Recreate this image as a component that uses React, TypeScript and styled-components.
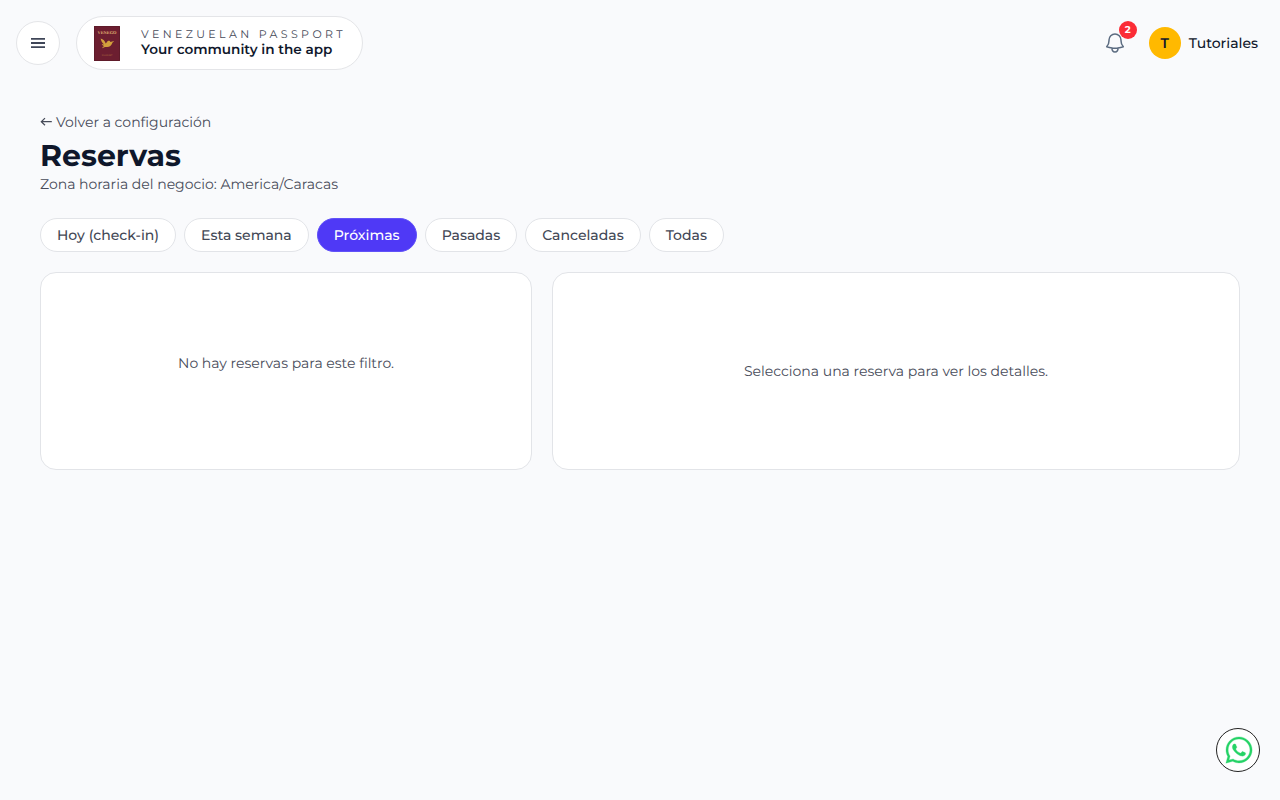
import React from "react";
import styled, { createGlobalStyle } from "styled-components";
import { FaWhatsapp } from "react-icons/fa";

const GlobalStyle = createGlobalStyle`
  *, *::before, *::after { box-sizing: border-box; }
  body {
    margin: 0;
    background: #f9fafc;
    color: #0f172b;
    font-family: Montserrat, Inter, "Noto Sans", sans-serif;
    font-size: 14px;
    line-height: 20px;
    text-rendering: geometricPrecision;
  }
  h1, p { margin: 0; }
  button, a { font: inherit; color: inherit; text-decoration: none; text-rendering: inherit; }
`;

const Page = styled.div`
  min-height: 100vh;
  display: flex;
  flex-direction: column;
`;

const Header = styled.header`
  height: 86px;
  padding: 0 22px 0 16px;
  display: flex;
  align-items: center;
  justify-content: space-between;
`;

const HeaderGroup = styled.div<{ $gap: number }>`
  display: flex;
  align-items: center;
  gap: ${(p) => p.$gap}px;
`;

const MenuButton = styled.button`
  width: 44px;
  height: 44px;
  padding: 0;
  display: grid;
  place-items: center;
  border: 1px solid #e4e5e8;
  border-radius: 50%;
  background: #fff;
`;

const Brand = styled.a`
  width: 287px;
  height: 54px;
  padding-left: 17px;
  display: flex;
  align-items: center;
  border: 1px solid #e4e5e8;
  border-radius: 27px;
  background: #fff;
`;

const BrandCopy = styled.div`
  margin: -3px 0 0 21px;
  white-space: nowrap;
`;

const BrandEyebrow = styled.div`
  margin-bottom: 2px;
  color: #474b59;
  font-size: 11px;
  line-height: 14px;
  letter-spacing: 3.38px;
  text-transform: uppercase;
`;

const BrandTitle = styled.div`
  font-size: 13.6px;
  font-weight: 600;
  line-height: 14px;
`;

const BellButton = styled.button`
  position: relative;
  width: 24px;
  height: 24px;
  padding: 0;
  border: 0;
  background: none;
  color: #5b6b80;
  svg { display: block; }
`;

const Badge = styled.span`
  position: absolute;
  top: -10px;
  left: 16px;
  width: 18px;
  height: 18px;
  border-radius: 50%;
  background: #fb2c36;
  color: #fff;
  font-size: 10px;
  font-weight: 700;
  line-height: 18px;
  text-align: center;
`;

const Account = styled.div`
  display: flex;
  align-items: center;
  gap: 8px;
  font-weight: 500;
`;

const Avatar = styled.div`
  width: 32px;
  height: 32px;
  border-radius: 50%;
  background: #ffb900;
  font-weight: 600;
  line-height: 32px;
  text-align: center;
`;

const Main = styled.main`
  padding: 26px 40px 0;
`;

const Muted = styled.p`
  color: #474b59;
`;

const Back = styled.a`
  display: flex;
  align-items: center;
  gap: 4px;
  color: #474b59;
`;

const Title = styled.h1`
  margin-top: 6px;
  font-size: 30px;
  font-weight: 700;
  line-height: 36px;
`;

const Filters = styled.nav`
  margin-top: 24px;
  display: flex;
  gap: 8px;
`;

const Filter = styled.button<{ $active?: boolean }>`
  height: 34px;
  padding: 0 16px;
  border: 1px solid ${(p) => (p.$active ? "#6152f8" : "#e2e4e8")};
  border-radius: 17px;
  background: ${(p) => (p.$active ? "#4f39f6" : "#fff")};
  color: ${(p) => (p.$active ? "#fff" : "#434856")};
  font-weight: 500;
`;

const Panels = styled.section`
  margin-top: 20px;
  display: grid;
  grid-template-columns: 492px 1fr;
  gap: 20px;
`;

const Panel = styled.div<{ $bottom?: number }>`
  height: 198px;
  padding-bottom: ${(p) => p.$bottom ?? 0}px;
  display: grid;
  place-items: center;
  border: 1px solid #e2e4e8;
  border-radius: 16px;
  background: #fff;
`;

const WhatsappButton = styled.a`
  position: fixed;
  right: 20px;
  bottom: 28px;
  width: 44px;
  height: 44px;
  padding-left: 2px;
  display: grid;
  place-items: center;
  border: 1px solid #222;
  border-radius: 50%;
  background: #fff;
  color: #25d366;
`;

const Passport = () => (
  <svg width="26" height="35" viewBox="0 0 26 35">
    <rect width="26" height="35" rx="0.6" fill="#6c1e30" />
    <rect x="0.4" y="0.4" width="25.2" height="34.2" fill="none" stroke="#5a1b29" strokeWidth="0.7" />
    <text x="13" y="8.2" textAnchor="middle" fill="#e0b070" fontFamily="Liberation Serif, serif" fontWeight="700" fontSize="4.400">VENEGO</text>
    <path d="M6.600 12.500c2.800.6 4.300 2.400 5.100 5 .8-.5 1.300-1.900 2.200-2.500 1-.7 2.200-.2 2.500.9l3.700-1c-.8 1-1.400 1.200-1.900 2.300-.9 2.200-2.700 4-5.700 3.700-1.400-.1-2.400.2-4.300 1.300.4-1.100 1-1.700 2-2.200-1.300-.2-2-.8-2.400-1.900l2.300.5c-1.800-1.600-3-3.500-3.500-6.100z" fill="#d3a03c" />
    <text x="13" y="29.8" textAnchor="middle" fill="#b87a45" fontFamily="Liberation Serif, serif" fontSize="2.200">PASSPORT</text>
  </svg>
);

const BellIcon = () => (
  <svg width="24" height="24" viewBox="0 0 24 24" fill="none" stroke="currentColor" strokeWidth="1.5" strokeLinecap="round" strokeLinejoin="round">
    <path d="M14.857 17.082a23.848 23.848 0 0 0 5.454-1.31A8.967 8.967 0 0 1 18 9.750V9A6 6 0 0 0 6 9v.75a8.967 8.967 0 0 1-2.312 6.022c1.733.64 3.56 1.085 5.455 1.310m5.714 0a24.255 24.255 0 0 1-5.714 0m5.714 0a3 3 0 1 1-5.714 0" />
  </svg>
);

const filters = ["Hoy (check-in)", "Esta semana", "Próximas", "Pasadas", "Canceladas", "Todas"];

export default function App() {
  return (
    <Page>
      <GlobalStyle />
      <Header>
        <HeaderGroup $gap={16}>
          <MenuButton aria-label="Menú">
            <svg width="14" height="10" viewBox="0 0 14 10" stroke="#3f4658" strokeWidth="1.800">
              <path d="M0 .9h14M0 5h14M0 9.100h14" />
            </svg>
          </MenuButton>
          <Brand href="#">
            <Passport />
            <BrandCopy>
              <BrandEyebrow>Venezuelan Passport</BrandEyebrow>
              <BrandTitle>Your community in the app</BrandTitle>
            </BrandCopy>
          </Brand>
        </HeaderGroup>
        <HeaderGroup $gap={22}>
          <BellButton aria-label="Notificaciones">
            <BellIcon />
            <Badge>2</Badge>
          </BellButton>
          <Account>
            <Avatar>T</Avatar>
            Tutoriales
          </Account>
        </HeaderGroup>
      </Header>
      <Main>
        <Back href="#">
          <svg width="12" height="10" viewBox="0 0 12 10" fill="none" stroke="currentColor" strokeWidth="1.200">
            <path d="M11.800 4.700H1.500M5 1.100L1.300 4.700L5 8.300" />
          </svg>
          Volver a configuración
        </Back>
        <Title>Reservas</Title>
        <Muted>Zona horaria del negocio: America/Caracas</Muted>
        <Filters>
          {filters.map((label) => (
            <Filter key={label} $active={label === "Próximas"}>{label}</Filter>
          ))}
        </Filters>
        <Panels>
          <Panel $bottom={16}>
            <Muted>No hay reservas para este filtro.</Muted>
          </Panel>
          <Panel>
            <Muted>Selecciona una reserva para ver los detalles.</Muted>
          </Panel>
        </Panels>
      </Main>
      <WhatsappButton href="#" aria-label="WhatsApp">
        <FaWhatsapp size={30} stroke="currentColor" strokeWidth={5} />
      </WhatsappButton>
    </Page>
  );
}
